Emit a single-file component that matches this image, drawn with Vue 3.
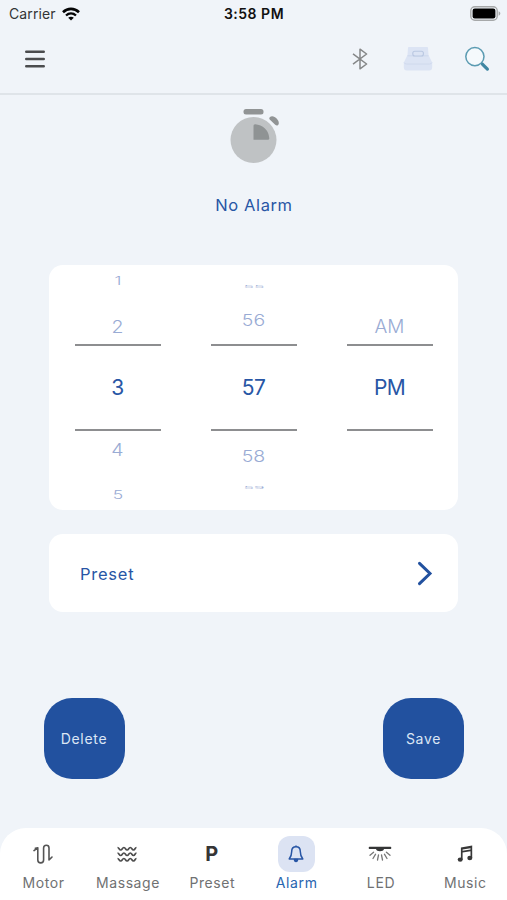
<template>
  <div class="screen">
    <header class="top">
      <div class="status-bar">
        <div class="carrier">
          <span>Carrier</span>
          <svg width="18" height="14" viewBox="0 0 18 14" fill="none" stroke="#050506">
            <path d="M1 5.2C5.6.8 12.4.8 17 5.2" stroke-width="2.6" />
            <path d="M4 8.5c2.9-2.7 7.1-2.7 10 0" stroke-width="2.3" />
            <path d="M9 13.6 6.2 10.8c1.6-1.4 4-1.4 5.6 0z" fill="#050506" stroke="none" />
          </svg>
        </div>
        <span class="clock">3:58 PM</span>
        <svg class="battery" width="31" height="15" viewBox="0 0 31 15">
          <rect x=".8" y=".8" width="26.4" height="13.4" rx="4" fill="none" stroke="#a6a8a9" stroke-width="1.4" />
          <rect x="2.6" y="2.6" width="22.8" height="9.8" rx="2.2" fill="#000" />
          <path d="M28.6 5.3c2.3.8 2.3 3.6 0 4.4z" fill="#a6a8a9" />
        </svg>
      </div>

      <div class="toolbar">
        <svg class="menu" width="20" height="18" viewBox="0 0 20 18" stroke="#4b4c4e" stroke-width="2.6" stroke-linecap="round">
          <path d="M1.3 1.8h17.4M1.3 9h17.4M1.3 16.2h17.4" />
        </svg>
        <div class="tools">
          <svg width="16" height="22" viewBox="0 0 16 22" fill="none" stroke="#858788" stroke-width="1.5" stroke-linejoin="round">
            <path d="M1 5.8 14.6 16 8 20.8V1.2L14.6 6 1 16.2" />
          </svg>
          <svg width="30" height="26" viewBox="0 0 30 26">
            <path d="M5 1.700q0-.7.9-.7h18.200q.9 0 .9.700l.5 7.300 3.700 7.500v4.500q0 3.500-3 3.500H3.800q-3 0-3-3.500v-4.500L4.500 9z" fill="#dce4f4" />
            <path d="M4.500 9.800h21M1 16.500q.5 1.500 2.500 1.500h23q2 0 2.500-1.500" fill="none" stroke="#cbd5eb" stroke-width=".8" />
            <rect x="9.800" y="5.300" width="10.600" height="4.700" rx="2" fill="#dce4f4" stroke="#b9c7e1" stroke-width="1.100" />
          </svg>
          <svg width="26" height="26" viewBox="0 0 26 26" fill="none">
            <circle cx="10.900" cy="10.600" r="9.100" fill="#f5f9fc" stroke="#5b9bb2" stroke-width="1.500" />
            <path d="m17.300 17 1.500 1.500" stroke="#5b9bb2" stroke-width="1.800" />
            <path d="m18.600 18.300 4.800 4.800" stroke="#3f86a2" stroke-width="3.200" stroke-linecap="round" />
          </svg>
        </div>
      </div>
    </header>

    <section class="alarm-state">
      <svg width="50" height="54" viewBox="0 0 50 54">
        <circle cx="23.500" cy="31" r="23" fill="#bfc2c4" />
        <rect x="13.500" y="0" width="20" height="5.500" rx="2.500" fill="#919495" />
        <path d="M40 8c3-3 9.500 2.500 8.800 6.500-.5 2.300-2.200 2.700-3.600 1.300l-5-4.800c-1.200-1.100-1.200-2.100-.2-3z" fill="#919495" />
        <path d="M23.500 16.800q0-1.700 1.700-1.600A15 15 0 0 1 39.300 29.300q.1 1.500-1.500 1.500H23.500z" fill="#8f9394" />
      </svg>
      <p>No Alarm</p>
    </section>

    <section class="card picker">
      <div v-for="wheel in wheels" :key="wheel.name" :class="['wheel', wheel.name]">
        <div class="above">
          <span v-for="(v, i) in wheel.above" :key="v" :class="i === wheel.above.length - 1 ? 'near' : 'far'">{{ v }}</span>
        </div>
        <div class="current">{{ wheel.value }}</div>
        <div class="below">
          <span v-for="(v, i) in wheel.below" :key="v" :class="i === 0 ? 'near' : 'far'">{{ v }}</span>
        </div>
      </div>
    </section>

    <section class="card preset-row">
      <span>Preset</span>
      <svg width="16" height="25" viewBox="0 0 16 25" fill="none" stroke="#22519f" stroke-width="3" stroke-linecap="round" stroke-linejoin="miter">
        <path d="M2.500 2.300 13 12.500 2.500 22.700" />
      </svg>
    </section>

    <div class="actions">
      <button>Delete</button>
      <button>Save</button>
    </div>

    <nav class="tab-bar">
      <div v-for="tab in tabs" :key="tab" :class="['tab', { active: activeTab === tab }]" @click="activeTab = tab">
        <div class="icon-box">
          <svg v-if="tab === 'Motor'" width="20" height="22" viewBox="0 0 20 22" fill="none" stroke="#555" stroke-width="1.600" stroke-linecap="round" stroke-linejoin="round">
            <path d="M1 7.600 4.800 4.800V17a2.900 2.900 0 0 0 5.800 0V5a2.700 2.700 0 0 1 5.400 0v12l3-3M4.800 4.800 2.300 5.200M16 17v-3.500" />
          </svg>
          <svg v-else-if="tab === 'Massage'" width="20" height="17" viewBox="0 0 20 17" fill="none" stroke="#4d4d4d" stroke-width="1.700">
            <path d="M.5 1.500C2.200 1.500 2 4 3.700 4S5.200 1.500 6.900 1.500 8.400 4 10.100 4s1.500-2.500 3.200-2.500S14.800 4 16.500 4s1.300-2.500 3-2.500" />
            <path d="M.5 7C2.200 7 2 9.500 3.700 9.500S5.200 7 6.900 7s1.500 2.500 3.200 2.500S11.600 7 13.300 7s1.500 2.500 3.200 2.500S17.800 7 19.500 7" />
            <path d="M.5 12.500c1.700 0 1.500 2.500 3.200 2.500s1.500-2.500 3.200-2.500S8.400 15 10.100 15s1.500-2.500 3.200-2.500 1.500 2.500 3.200 2.500 1.300-2.500 3-2.500" />
          </svg>
          <span v-else-if="tab === 'Preset'" class="letter">P</span>
          <svg v-else-if="tab === 'Alarm'" width="16" height="18" viewBox="0 0 16 18" fill="none" stroke="#2856a5" stroke-width="1.500" stroke-linejoin="round">
            <path d="M8 1.800c-2.800 0-4.300 2-4.300 4.600 0 4.200-.8 5.300-2.500 7.600h13.600c-1.700-2.300-2.500-3.400-2.500-7.600 0-2.600-1.500-4.600-4.300-4.600z" />
            <path d="M8 .5v1M6.500 14.500C6.500 17.200 9.500 17.200 9.500 14.500z" fill="#2856a5" />
          </svg>
          <svg v-else-if="tab === 'LED'" width="24" height="16" viewBox="0 0 24 16">
            <path d="M1.500.8h21q.8 0 .8 1.100t-.8 1.100H16c-.5 3-7.500 3-8 0H1.500Q.7 3 .7 1.900T1.500.8z" fill="#353637" />
            <path d="M5.600 6.200 2 9.300M7.600 8.200 5 12.500M10.500 9l-1 5M13.500 9l1 5M16.400 8.200l2.600 4.300M18.400 6.200 22 9.300" fill="none" stroke="#777" stroke-width="1.300" stroke-linecap="round" />
          </svg>
          <svg v-else width="16" height="18" viewBox="0 0 16 18" fill="#383838">
            <path fill-rule="evenodd" d="M3.900 2.400 15.200.6v12.300h-1.700V6.300l-7.900 1.300v6.900H3.900zM5.600 4.600v1.200l7.900-1.300V3.300z" />
            <ellipse cx="3.200" cy="14.600" rx="2.500" ry="2.200" />
            <ellipse cx="12.800" cy="13" rx="2.500" ry="2.200" />
          </svg>
        </div>
        <span class="label">{{ tab }}</span>
      </div>
    </nav>
  </div>
</template>

<script setup>
import { ref } from 'vue'

const wheels = [
  { name: 'hour', above: ['1', '2'], value: '3', below: ['4', '5'] },
  { name: 'minute', above: ['55', '56'], value: '57', below: ['58', '59'] },
  { name: 'period', above: ['AM'], value: 'PM', below: [] }
]

const tabs = ['Motor', 'Massage', 'Preset', 'Alarm', 'LED', 'Music']
const activeTab = ref('Alarm')
</script>

<style>
body {
  background: #f0f4f9;
}
</style>

<style scoped>
.screen {
  box-sizing: border-box;
  width: 507px;
  height: 900px;
  display: flex;
  flex-direction: column;
  background: #f0f4f9;
  color: #2856a5;
  font-family: Inter, "Liberation Sans", sans-serif;
  overflow: hidden;
}

svg {
  display: block;
  flex: none;
}

.top {
  box-sizing: border-box;
  height: 95px;
  border-bottom: 2px solid #dfe4e9;
}

.status-bar {
  display: grid;
  grid-template-columns: 1fr auto 1fr;
  align-items: center;
  height: 27px;
  padding: 0 6px 0 9px;
  color: #333436;
  font-size: 14px;
}

.carrier {
  display: flex;
  align-items: center;
  gap: 6px;
  letter-spacing: 0.1px;
}

.clock {
  margin-right: 2px;
  color: #111;
  font-weight: 600;
  letter-spacing: 0.5px;
}

.battery {
  justify-self: end;
}

.toolbar {
  display: flex;
  align-items: center;
  justify-content: space-between;
  height: 64px;
  padding: 0 17px 0 25px;
}

.tools {
  display: flex;
  align-items: center;
  gap: 35px;
}

.tools svg:last-child {
  margin-left: -4px;
}

.alarm-state {
  height: 170px;
  display: flex;
  flex-direction: column;
  align-items: center;
  padding-top: 14px;
  box-sizing: border-box;
}

.alarm-state svg {
  margin-left: 3px;
}

.alarm-state p {
  margin: 32px 0 0 1px;
  font-size: 16.500px;
  line-height: 20px;
  letter-spacing: 0.6px;
}

.card {
  box-sizing: border-box;
  width: 409px;
  margin: 0 auto;
  border-radius: 14px;
  background: #fff;
  flex: none;
}

.picker {
  display: flex;
  gap: 50px;
  height: 245px;
  padding: 0 25.500px;
}

.wheel {
  width: 86px;
  text-align: center;
}

.above,
.below {
  display: flex;
  flex-direction: column;
  height: 79px;
}

.wheel span {
  display: block;
  height: 32px;
  line-height: 32px;
  font-size: 19.500px;
  font-weight: 300;
  color: #99abd4;
}

.current {
  box-sizing: border-box;
  height: 87px;
  line-height: 84px;
  border-top: 2px solid #8d8e90;
  border-bottom: 2px solid #8d8e90;
  font-size: 21px;
  letter-spacing: -0.6px;
}

.hour .near {
  transform: scaleY(0.9);
}

.hour .far {
  transform: scale(0.9, 0.58);
}

.hour .above .near {
  margin-top: 14px;
}

.hour .below .near {
  margin-top: 3px;
}

.hour .below .far {
  margin-top: 13px;
}

.minute .near {
  transform: scaleY(0.8);
}

.minute .far {
  transform: scale(0.9, 0.2);
}

.minute .above .far {
  margin-top: 6px;
}

.minute .above .near {
  margin-top: 1px;
}

.minute .below .near {
  margin-top: 9px;
}

.period .above .near {
  margin-top: 46px;
  font-size: 19px;
  transform: scaleY(0.95);
}

.preset-row {
  display: flex;
  align-items: center;
  justify-content: space-between;
  height: 78px;
  margin-top: 24px;
  padding: 1px 25px 0 31px;
  font-size: 16.500px;
  letter-spacing: 0.75px;
}

.actions {
  display: flex;
  justify-content: space-between;
  padding: 86px 43px 0 43.500px;
}

.actions button {
  width: 81px;
  height: 81px;
  padding: 0;
  border: 0;
  border-radius: 28px;
  background: #22519f;
  color: #dce6f5;
  font-family: inherit;
  font-size: 14px;
  letter-spacing: 0.7px;
}

.tab-bar {
  box-sizing: border-box;
  display: grid;
  grid-template-columns: repeat(6, 1fr);
  height: 72px;
  margin-top: auto;
  padding: 8px 0 0 1px;
  border-radius: 26px 26px 0 0;
  background: #fff;
}

.tab {
  display: flex;
  flex-direction: column;
  align-items: center;
  gap: 2px;
  color: #707172;
}

.icon-box {
  display: flex;
  align-items: center;
  justify-content: center;
  width: 37px;
  height: 36px;
  border-radius: 12px;
}

.letter {
  color: #353535;
  font-size: 20px;
  font-weight: 700;
}

.label {
  padding-left: 1px;
  font-size: 14px;
  line-height: 18px;
  letter-spacing: 0.6px;
}

.tab.active {
  color: #2865b0;
}

.tab.active .icon-box {
  background: #dce3f3;
}
</style>
